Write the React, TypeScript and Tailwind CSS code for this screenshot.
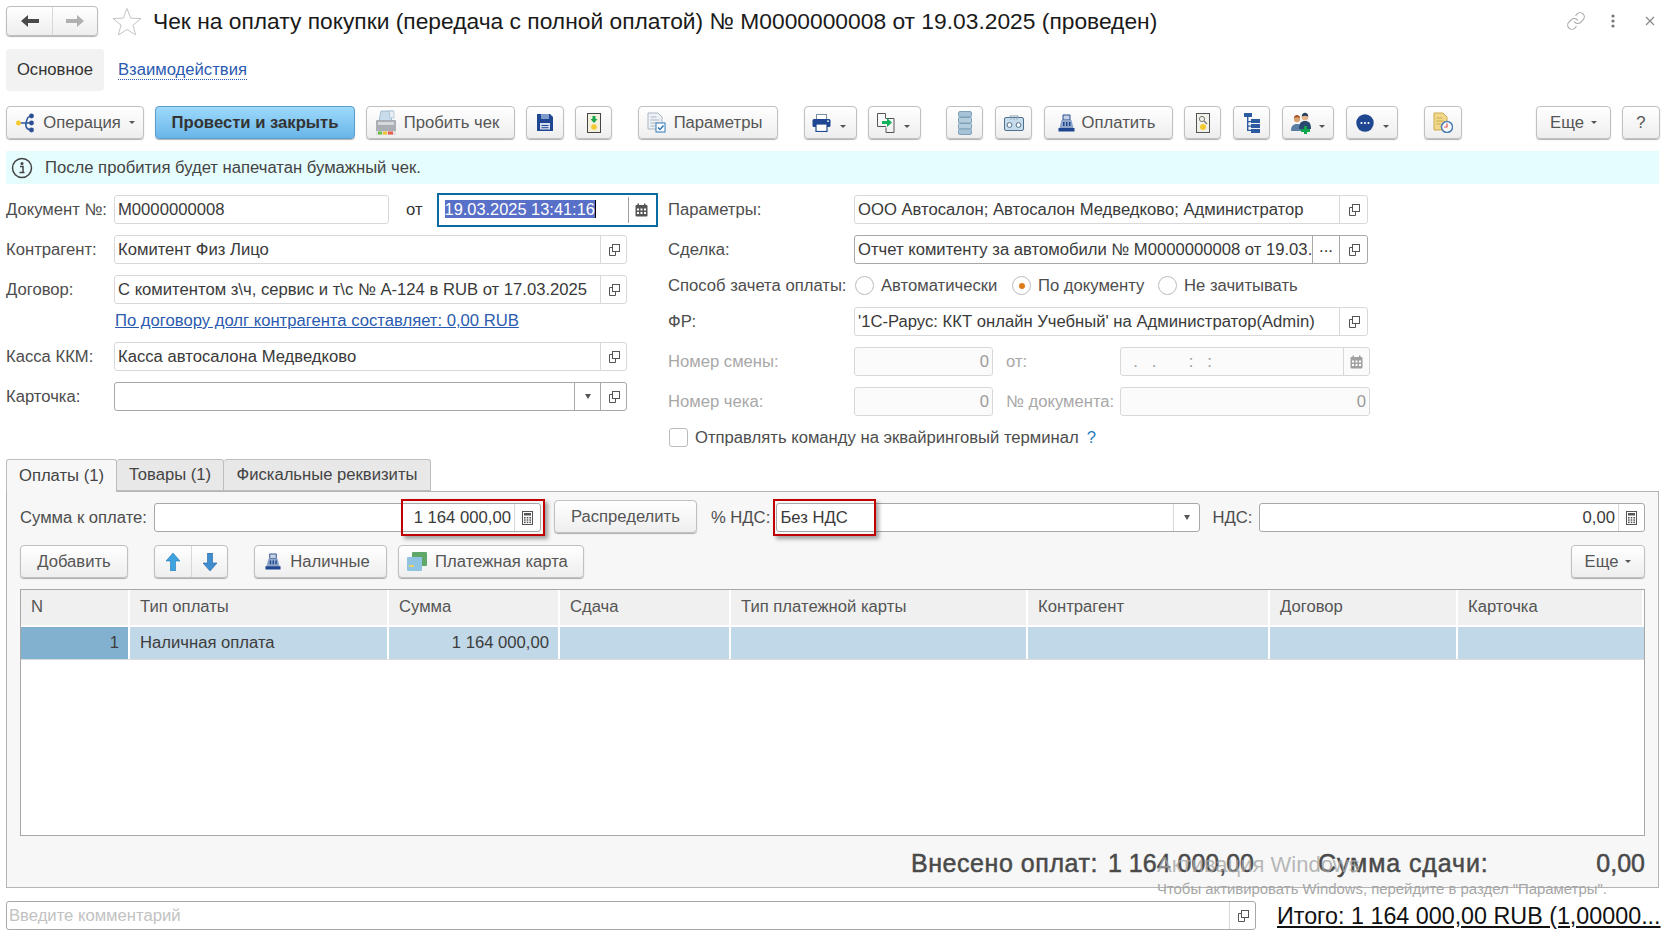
import React from 'react';
import { Link } from 'lucide-react';

const OpenIcon = () => (
  <svg width="14" height="14" viewBox="0 0 14 14" fill="none" stroke="#555" strokeWidth="1">
    <rect x="5.5" y="1.5" width="7" height="7" />
    <path d="M5.5 4.5h-3v8h6v-4" />
  </svg>
);

const CalendarIcon = ({ color = '#555' }: { color?: string }) => (
  <svg width="13" height="14" viewBox="0 0 13 14">
    <rect x="0.5" y="2" width="12" height="11.5" rx="1" fill={color} />
    <rect x="2.5" y="0.5" width="1.5" height="3" fill={color} />
    <rect x="9" y="0.5" width="1.5" height="3" fill={color} />
    <g fill="#fff">
      <rect x="2" y="5.5" width="2" height="2" /><rect x="5.5" y="5.5" width="2" height="2" /><rect x="9" y="5.5" width="2" height="2" />
      <rect x="2" y="9" width="2" height="2" /><rect x="5.5" y="9" width="2" height="2" /><rect x="9" y="9" width="2" height="2" />
    </g>
  </svg>
);

const CalcIcon = () => (
  <svg width="11" height="14" viewBox="0 0 11 14">
    <rect x="0.5" y="0.5" width="10" height="13" fill="#fff" stroke="#555" />
    <rect x="2" y="2" width="7" height="2.5" fill="#555" />
    <g fill="#555">
      <rect x="2" y="6" width="1.6" height="1.5" /><rect x="4.7" y="6" width="1.6" height="1.5" /><rect x="7.4" y="6" width="1.6" height="1.5" />
      <rect x="2" y="8.3" width="1.6" height="1.5" /><rect x="4.7" y="8.3" width="1.6" height="1.5" /><rect x="7.4" y="8.3" width="1.6" height="1.5" />
      <rect x="2" y="10.6" width="1.6" height="1.5" /><rect x="4.7" y="10.6" width="1.6" height="1.5" /><rect x="7.4" y="10.6" width="1.6" height="1.5" />
    </g>
  </svg>
);

const Caret = () => <span className="inline-block w-0 h-0 border-x-[3px] border-x-transparent border-t-[3px] border-t-[#555]" />;
const DropCaret = () => <span className="inline-block w-0 h-0 border-x-[3.5px] border-x-transparent border-t-[5px] border-t-[#555]" />;

const IconOperation = () => (
  <svg width="22" height="22" viewBox="0 0 22 22" fill="none">
    <circle cx="3.5" cy="11" r="2.5" fill="#f4c92f" />
    <path d="M6 11h5M17 4c-4 0-5 2-6 7s2 7 6 7" stroke="#2d5a9e" strokeWidth="1.6" />
    <path d="M11 11h6" stroke="#2d5a9e" strokeWidth="1.6" />
    <circle cx="16.5" cy="4" r="2.4" fill="#2d4f94" />
    <circle cx="16.5" cy="11" r="2.4" fill="#2d4f94" />
    <circle cx="16.5" cy="18" r="2.4" fill="#2d4f94" />
  </svg>
);
const IconReceipt = () => (
  <svg width="22" height="26" viewBox="0 0 22 26">
    <path d="M6 1h12l-2 10H4z" fill="#c8dceb" stroke="#8aa9c0" strokeWidth="0.7" />
    <path d="M14 1h5v7h-4z" fill="#e8eef3" stroke="#8aa9c0" strokeWidth="0.5" />
    <rect x="1" y="10" width="20" height="12" rx="1" fill="#a9afb5" />
    <rect x="3" y="12" width="16" height="3" fill="#d7dadd" />
    <rect x="1" y="21" width="20" height="4" fill="#e0e0e0" />
    <rect x="3" y="21.5" width="4" height="3" fill="#6cc04a" />
    <rect x="8" y="21.5" width="4" height="3" fill="#f2c230" />
    <rect x="13" y="21.5" width="5" height="3" fill="#e85b4a" />
  </svg>
);
const IconSave = () => (
  <svg width="18" height="19" viewBox="0 0 18 19">
    <path d="M1 1h13l3 3v14H1z" fill="#1f4690" />
    <rect x="5" y="1" width="8" height="5" fill="#7f9bcb" />
    <rect x="4" y="10" width="10" height="6.5" fill="#d5deee" />
    <rect x="5.5" y="12" width="7" height="1" fill="#1f4690" />
    <rect x="5.5" y="14.2" width="7" height="1" fill="#1f4690" />
  </svg>
);
const IconSignal = () => (
  <svg width="14" height="20" viewBox="0 0 14 20">
    <rect x="0.5" y="0.5" width="13" height="19" fill="#f3f1dd" stroke="#444" />
    <path d="M5.5 3h3v3h2L7 10 3.5 6h2z" fill="#13a54b" />
    <circle cx="7" cy="14" r="2.8" fill="#f4c92f" />
  </svg>
);
const IconParams = () => (
  <svg width="19" height="21" viewBox="0 0 19 21">
    <path d="M1 1h10l4 4v12H1z" fill="#eef2f6" stroke="#a9b6c2" />
    <path d="M3.5 5h6M3.5 8h9M3.5 11h9M3.5 14h5" stroke="#a9b6c2" />
    <rect x="9" y="11" width="9" height="9" fill="#fff" stroke="#2f78b7" />
    <path d="M11 15.5l2 2 3.5-4" stroke="#2f78b7" strokeWidth="1.5" fill="none" />
  </svg>
);
const IconPrint = () => (
  <svg width="19" height="18" viewBox="0 0 19 18">
    <rect x="4.5" y="0.5" width="10" height="5" fill="#fff" stroke="#7d8da3" />
    <rect x="0.5" y="5" width="18" height="8" rx="1.5" fill="#1f4690" />
    <rect x="4" y="10" width="11" height="7.5" fill="#fff" stroke="#1f4690" strokeWidth="1.2" />
    <rect x="15" y="6.5" width="2" height="1.2" fill="#fff" />
  </svg>
);
const IconCopyIn = () => (
  <svg width="20" height="21" viewBox="0 0 20 21" fill="none">
    <path d="M10 14.5H1.5v-13h8v5" stroke="#555" />
    <path d="M10 6.5h8v14h-8v-5" stroke="#555" />
    <path d="M6 9h5V6l5 4.5-5 4.5v-3H6z" fill="#12b15a" />
  </svg>
);
const IconStack = () => (
  <svg width="14" height="24" viewBox="0 0 14 24">
    <rect x="0.5" y="0.5" width="13" height="5.5" rx="1.5" fill="#a6c2d6" stroke="#7ea0b9" />
    <rect x="0.5" y="6.5" width="13" height="5.5" rx="1" fill="#b4cddd" stroke="#7ea0b9" />
    <rect x="0.5" y="12.5" width="13" height="5.5" rx="1" fill="#b4cddd" stroke="#7ea0b9" />
    <rect x="0.5" y="18" width="13" height="5.5" rx="1.5" fill="#a6c2d6" stroke="#7ea0b9" />
  </svg>
);
const IconCassette = () => (
  <svg width="20" height="16" viewBox="0 0 20 16">
    <rect x="0.5" y="2.5" width="19" height="13" rx="1.5" fill="#c6dceb" stroke="#4e6f8e" />
    <path d="M6 2.5V.8h8v1.7M7 1v4M10 1v4M13 1v4" stroke="#8ca4b8" fill="none" strokeWidth="0.8" />
    <circle cx="5.5" cy="10" r="2.4" fill="#fff" stroke="#4e6f8e" />
    <circle cx="14.5" cy="10" r="2.4" fill="#fff" stroke="#4e6f8e" />
  </svg>
);
const IconRegister = ({ size = 17 }: { size?: number }) => (
  <svg width={size} height={size + 1} viewBox="0 0 17 18">
    <path d="M5 1h7v5H5z" fill="#c6d2e3" stroke="#2b4f90" />
    <path d="M3.5 6h10l2 8h-14z" fill="#8fa6c9" />
    <path d="M5 8h1.5v4H5zM8 8h1.5v4H8zM11 8h1.5v4H11z" fill="#1f4690" />
    <rect x="0.5" y="14" width="16" height="3.5" fill="#1f4690" />
  </svg>
);
const IconSearchFrame = () => (
  <svg width="14" height="20" viewBox="0 0 14 20" fill="none">
    <rect x="0.5" y="0.5" width="13" height="19" fill="#f1f1ea" stroke="#555" />
    <circle cx="6" cy="6" r="2.6" stroke="#777" />
    <path d="M8 8l3 3" stroke="#777" strokeWidth="1.2" />
    <circle cx="7" cy="14" r="3" fill="#f4c92f" />
  </svg>
);
const IconTree = () => (
  <svg width="16" height="20" viewBox="0 0 16 20" fill="#2b5aa0">
    <rect x="0" y="0" width="8" height="4" />
    <path d="M3 4h1.4v14H3zM4 8h3v1.2H4zM4 12.6h3v1.2H4zM4 16.8h3V18H4z" />
    <rect x="7" y="6" width="9" height="4" />
    <rect x="7" y="11" width="9" height="4" />
    <rect x="7" y="16" width="9" height="4" />
  </svg>
);
const IconPeople = () => (
  <svg width="22" height="22" viewBox="0 0 22 22">
    <circle cx="6" cy="7" r="3.2" fill="#d9a273" />
    <path d="M3 6c0-4 6-4 6 0-2-1-4-1-6 0z" fill="#a3541f" />
    <path d="M0 19c0-5 2-7 6-7s5 2 5 7z" fill="#5a7da3" />
    <circle cx="14" cy="5" r="3.4" fill="#e2b48b" />
    <path d="M10.8 4.5c0-5 6.4-5 6.4 0-2-1-4.400-1-6.400 0z" fill="#24405f" />
    <path d="M8 17c0-6 2-8 6-8s6 2 6 8z" fill="#28486f" />
    <path d="M13 14h3v3h3v3h-3v2h-3v-2h-3v-3h3z" fill="#0da64c" />
  </svg>
);
const IconDots = () => (
  <svg width="18" height="18" viewBox="0 0 18 18">
    <circle cx="9" cy="9" r="8.700" fill="#1f4690" />
    <circle cx="5.500" cy="9" r="1.100" fill="#fff" /><circle cx="9" cy="9" r="1.100" fill="#fff" /><circle cx="12.500" cy="9" r="1.100" fill="#fff" />
  </svg>
);
const IconDocClock = () => (
  <svg width="20" height="21" viewBox="0 0 20 21">
    <path d="M1 1h9l4 4v13H1z" fill="#f0d98a" stroke="#cdaa4e" />
    <path d="M3.500 6h6M3.500 9h7M3.500 12h4" stroke="#cdaa4e" />
    <circle cx="14" cy="15" r="5.500" fill="#fff" stroke="#4a7db5" strokeWidth="1.500" />
    <path d="M14 11.500V15h-3" stroke="#d9534f" strokeWidth="1.200" fill="none" />
  </svg>
);

const Btn: React.FC<{ w: string; ml?: string; children: React.ReactNode; primary?: boolean }> = ({ w, ml = '', children, primary }) => (
  <div
    className={`${w} ${ml} h-[33px] shrink-0 flex items-center justify-center rounded-[4px] border ${
      primary
        ? 'bg-gradient-to-b from-[#9edafc] to-[#68b5e8] border-[#5b9ecb] text-[#333] font-bold'
        : 'bg-gradient-to-b from-white to-[#eeeeee] border-[#c0c0c0] text-[#555]'
    } shadow-[0_1px_1px_rgba(0,0,0,0.3)]`}
  >
    {children}
  </div>
);

const Field: React.FC<{
  w: string;
  value?: string;
  dark?: boolean;
  disabled?: boolean;
  right?: boolean;
  children?: React.ReactNode;
}> = ({ w, value = '', dark, disabled, right, children }) => (
  <div
    className={`${w} h-[29px] shrink-0 flex items-stretch rounded-[3px] border ${
      dark ? 'border-[#a8a8a8]' : 'border-[#d8d8d8]'
    } ${disabled ? 'bg-[#fbfbfb]' : 'bg-white'}`}
  >
    <div
      className={`flex-1 min-w-0 px-[3px] leading-[27px] whitespace-pre overflow-hidden ${right ? 'text-right' : ''} ${
        disabled ? 'text-[#9a9a9a]' : 'text-[#3a3a3a]'
      }`}
    >
      {value}
    </div>
    {children}
  </div>
);

const Cell: React.FC<{ w?: string; children: React.ReactNode; border?: string }> = ({ w = 'w-[26px]', children, border = 'border-[#d8d8d8]' }) => (
  <div className={`${w} shrink-0 border-l ${border} flex items-center justify-center`}>{children}</div>
);

const Radio: React.FC<{ on?: boolean }> = ({ on }) => (
  <span className="w-[19px] h-[19px] shrink-0 rounded-full border border-[#bcbcbc] bg-white flex items-center justify-center">
    {on && <span className="w-[6px] h-[6px] rounded-full bg-[#e07b1a]" />}
  </span>
);

const headers = ['N', 'Тип оплаты', 'Сумма', 'Сдача', 'Тип платежной карты', 'Контрагент', 'Договор', 'Карточка'];

export default function App() {
  return (
    <div className="relative w-[1675px] h-[942px] overflow-hidden bg-white text-[16.65px] leading-[26px] text-[#4d4d4d] font-['Liberation_Sans',Arial,sans-serif]">
      {/* header */}
      <div className="flex items-center h-[30px] mt-[6px] pl-[6px]">
        <div className="w-[92px] h-[30px] flex rounded-[4px] border border-[#bdbdbd] bg-gradient-to-b from-white to-[#eeeeee] shadow-[0_1px_1px_rgba(0,0,0,0.3)]">
          <div className="w-[46px] flex items-center justify-center border-r border-[#d8d8d8]">
            <svg width="18" height="14" viewBox="0 0 18 14"><path d="M0 7l7-6v4h11v4H7v4z" fill="#4a4a4a" /></svg>
          </div>
          <div className="flex-1 flex items-center justify-center">
            <svg width="18" height="14" viewBox="0 0 18 14"><path d="M18 7l-7-6v4H0v4h11v4z" fill="#b0b0b0" /></svg>
          </div>
        </div>
        <svg className="ml-[14px]" width="30" height="28" viewBox="0 0 30 28">
          <path d="M15 1.500l3.700 9.600 10.300.5-8 6.500 2.700 9.900L15 22.500l-8.700 5.500L9 18.100 1 11.600l10.300-.5z" fill="#fff" stroke="#c4c4c4" />
        </svg>
        <div className="ml-[11px] text-[22.8px] text-[#1a1a1a] whitespace-nowrap leading-[30px]">
          Чек на оплату покупки (передача с полной оплатой) № М0000000008 от 19.03.2025 (проведен)
        </div>
        <div className="ml-auto flex items-center pr-[20px]">
          <Link size={20} strokeWidth={1.3} color="#a8a8a8" />
          <svg className="ml-[25px]" width="4" height="14" viewBox="0 0 4 14" fill="#777">
            <circle cx="2" cy="2" r="1.600" /><circle cx="2" cy="7" r="1.600" /><circle cx="2" cy="12" r="1.600" />
          </svg>
          <svg className="ml-[30px]" width="10" height="10" viewBox="0 0 10 10" stroke="#888" strokeWidth="1.200">
            <path d="M1 1l8 8M9 1l-8 8" />
          </svg>
        </div>
      </div>

      {/* page tabs */}
      <div className="flex items-center mt-[13px] pl-[6px] h-[42px]">
        <div className="w-[98px] h-[42px] rounded-[4px] bg-[#f2f2f2] flex items-center justify-center text-[#333]">Основное</div>
        <span className="ml-[14px] text-[#2a5bb0] border-b border-dotted border-[#2a5bb0] leading-[18px]">Взаимодействия</span>
      </div>

      {/* toolbar */}
      <div className="flex mt-[15px] pl-[6px] pr-[15px]">
        <Btn w="w-[138px]"><IconOperation /><span className="ml-[6px] mr-[8px]">Операция</span><Caret /></Btn>
        <Btn w="w-[200px]" ml="ml-[11px]" primary>Провести и закрыть</Btn>
        <Btn w="w-[149px]" ml="ml-[11px]"><IconReceipt /><span className="ml-[7px] mr-[7px]">Пробить чек</span></Btn>
        <Btn w="w-[38px]" ml="ml-[11px]"><IconSave /></Btn>
        <Btn w="w-[37px]" ml="ml-[11px]"><IconSignal /></Btn>
        <Btn w="w-[140px]" ml="ml-[26px]"><IconParams /><span className="ml-[8px] mr-[7px]">Параметры</span></Btn>
        <Btn w="w-[53px]" ml="ml-[26px]"><IconPrint /><span className="ml-[9px] mr-[3px]"><Caret /></span></Btn>
        <Btn w="w-[53px]" ml="ml-[11px]"><IconCopyIn /><span className="ml-[8px] mr-[3px]"><Caret /></span></Btn>
        <Btn w="w-[37px]" ml="ml-[25px]"><IconStack /></Btn>
        <Btn w="w-[37px]" ml="ml-[12px]"><IconCassette /></Btn>
        <Btn w="w-[129px]" ml="ml-[12px]"><IconRegister /><span className="ml-[7px] mr-[4px]">Оплатить</span></Btn>
        <Btn w="w-[37px]" ml="ml-[11px]"><IconSearchFrame /></Btn>
        <Btn w="w-[37px]" ml="ml-[12px]"><IconTree /></Btn>
        <Btn w="w-[52px]" ml="ml-[12px]"><IconPeople /><span className="ml-[6px]"><Caret /></span></Btn>
        <Btn w="w-[52px]" ml="ml-[12px]"><IconDots /><span className="ml-[9px]"><Caret /></span></Btn>
        <Btn w="w-[38px]" ml="ml-[26px]"><IconDocClock /></Btn>
        <Btn w="w-[75px]" ml="ml-auto"><span className="mr-[7px]">Еще</span><Caret /></Btn>
        <Btn w="w-[38px]" ml="ml-[11px]">?</Btn>
      </div>

      {/* info bar */}
      <div className="mt-[12px] ml-[6px] mr-[16px] h-[33px] bg-[#e6fdfe] flex items-center pl-[5px] text-[#444]">
        <svg width="22" height="22" viewBox="0 0 22 22" fill="none">
          <circle cx="11" cy="11" r="9.500" stroke="#444" strokeWidth="1.500" />
          <circle cx="11" cy="6.500" r="1.500" fill="#444" />
          <path d="M9 9.500h3v6h1.500M8.500 15.500h5" stroke="#444" strokeWidth="1.500" />
        </svg>
        <span className="ml-[12px]">После пробития будет напечатан бумажный чек.</span>
      </div>

      {/* requisites */}
      <div className="flex mt-[11px] pl-[6px]">
        <div className="w-[662px] shrink-0">
          <div className="flex items-center h-[29px]">
            <span className="w-[108px]">Документ №:</span>
            <Field w="w-[275px]" value="М0000000008" />
            <span className="ml-[17px] text-[#333]">от</span>
            <div className="ml-[14px] w-[221px] h-[34px] shrink-0 flex items-center border-2 border-[#0b6ba0] bg-white pl-[6px]">
              <span className="flex-1 leading-[20px] text-[16.4px] mb-[2px]">
                <span className="bg-[#5870c8] text-white border-r border-black">19.03.2025 13:41:16</span>
              </span>
              <div className="w-[28px] h-[26px] border-l border-[#a0a0a0] flex items-center justify-center pr-[2px]"><CalendarIcon /></div>
            </div>
          </div>
          <div className="flex items-center h-[29px] mt-[11px]">
            <span className="w-[108px]">Контрагент:</span>
            <Field w="w-[513px]" value="Комитент Физ Лицо"><Cell><OpenIcon /></Cell></Field>
          </div>
          <div className="flex items-center h-[29px] mt-[11px]">
            <span className="w-[108px]">Договор:</span>
            <Field w="w-[513px]" value="С комитентом з\ч, сервис и т\с № А-124 в RUB от 17.03.2025"><Cell><OpenIcon /></Cell></Field>
          </div>
          <div className="h-[38px] pl-[109px] pt-[7px] leading-[20px]">
            <span className="text-[#2a5bb0] underline">По договору долг контрагента составляет: 0,00 RUB</span>
          </div>
          <div className="flex items-center h-[29px]">
            <span className="w-[108px]">Касса ККМ:</span>
            <Field w="w-[513px]" value="Касса автосалона Медведково"><Cell><OpenIcon /></Cell></Field>
          </div>
          <div className="flex items-center h-[29px] mt-[11px]">
            <span className="w-[108px]">Карточка:</span>
            <Field w="w-[513px]" dark>
              <Cell border="border-[#a8a8a8]"><DropCaret /></Cell>
              <Cell border="border-[#a8a8a8]"><OpenIcon /></Cell>
            </Field>
          </div>
        </div>

        <div className="flex-1 min-w-0">
          <div className="flex items-center h-[29px]">
            <span className="w-[186px]">Параметры:</span>
            <Field w="w-[514px]" value="ООО Автосалон; Автосалон Медведково; Администратор"><Cell w="w-[28px]"><OpenIcon /></Cell></Field>
          </div>
          <div className="flex items-center h-[29px] mt-[11px]">
            <span className="w-[186px]">Сделка:</span>
            <Field w="w-[514px]" dark value="Отчет комитенту за автомобили № М0000000008 от 19.03.">
              <Cell w="w-[27px]" border="border-[#a8a8a8]"><span className="text-[#333] leading-none mb-[4px]">...</span></Cell>
              <Cell w="w-[28px]" border="border-[#a8a8a8]"><OpenIcon /></Cell>
            </Field>
          </div>
          <div className="flex items-center h-[29px] mt-[7px]">
            <span className="w-[187px] whitespace-nowrap">Способ зачета оплаты:</span>
            <Radio /><span className="ml-[7px] w-[131px]">Автоматически</span>
            <Radio on /><span className="ml-[7px] w-[120px]">По документу</span>
            <Radio /><span className="ml-[7px]">Не зачитывать</span>
          </div>
          <div className="flex items-center h-[29px] mt-[7px]">
            <span className="w-[186px]">ФР:</span>
            <Field w="w-[514px]" value="'1С-Рарус: ККТ онлайн Учебный' на Администратор(Admin)"><Cell w="w-[28px]"><OpenIcon /></Cell></Field>
          </div>
          <div className="flex items-center h-[29px] mt-[11px] text-[#a8a8a8]">
            <span className="w-[186px]">Номер смены:</span>
            <Field w="w-[139px]" value="0" right disabled />
            <span className="ml-[13px] w-[114px]">от:</span>
            <Field w="w-[250px]" value="  .   .       :   :" disabled>
              <Cell><CalendarIcon color="#a0a0a0" /></Cell>
            </Field>
          </div>
          <div className="flex items-center h-[29px] mt-[11px] text-[#a8a8a8]">
            <span className="w-[186px]">Номер чека:</span>
            <Field w="w-[139px]" value="0" right disabled />
            <span className="ml-[13px] w-[114px] whitespace-nowrap">№ документа:</span>
            <Field w="w-[250px]" value="0" right disabled />
          </div>
          <div className="flex items-center h-[19px] mt-[12px]">
            <span className="ml-[1px] w-[19px] h-[19px] rounded-[3px] border border-[#bcbcbc] bg-white" />
            <span className="ml-[7px]">Отправлять команду на эквайринговый терминал</span>
            <span className="ml-[8px] text-[#2a7fc0]">?</span>
          </div>
        </div>
      </div>

      {/* tabs */}
      <div className="flex mt-[12px] ml-[6px] h-[32px] relative z-10 text-[#444]">
        <div className="w-[111px] h-[33px] flex items-center justify-center rounded-t-[3px] border border-b-0 border-[#bdbdbd] bg-[#f7f7f7]">Оплаты (1)</div>
        <div className="w-[107px] h-[32px] flex items-center justify-center rounded-t-[3px] border-y border-r border-[#bdbdbd] bg-[#e8e8e8]">Товары (1)</div>
        <div className="w-[207px] h-[32px] flex items-center justify-center rounded-t-[3px] border-y border-r border-[#bdbdbd] bg-[#e8e8e8]">Фискальные реквизиты</div>
      </div>

      <div className="ml-[6px] mr-[16px] h-[397px] border border-[#b4b4b4] bg-[#f7f7f7] pl-[13px] pr-[13px] pt-[11px]">
        <div className="flex items-center h-[29px]">
          <span className="w-[135px] whitespace-nowrap">Сумма к оплате:</span>
          <div className="relative">
            <Field w="w-[387px]" dark value="1 164 000,00" right><Cell><CalcIcon /></Cell></Field>
            <div className="absolute -top-[4px] -right-[4px] w-[144px] h-[37px] border-2 border-[#c00000] shadow-[3px_3px_4px_rgba(0,0,0,0.35)]" />
          </div>
          <div className="ml-[13px] -mt-[2px]"><Btn w="w-[143px]">Распределить</Btn></div>
          <span className="ml-[14px] w-[66px] whitespace-nowrap">% НДС:</span>
          <div className="relative">
            <Field w="w-[424px]" dark value="Без НДС"><Cell><DropCaret /></Cell></Field>
            <div className="absolute -top-[4px] -left-[3px] w-[103px] h-[37px] border-2 border-[#c00000] shadow-[3px_3px_4px_rgba(0,0,0,0.35)]" />
          </div>
          <span className="ml-[12px] w-[47px]">НДС:</span>
          <Field w="w-[386px]" dark value="0,00" right><Cell><CalcIcon /></Cell></Field>
        </div>

        <div className="flex mt-[13px]">
          <Btn w="w-[108px]">Добавить</Btn>
          <div className="ml-[26px] w-[74px] h-[33px] shrink-0 flex rounded-[4px] border border-[#c0c0c0] bg-gradient-to-b from-white to-[#eeeeee] shadow-[0_1px_1px_rgba(0,0,0,0.3)]">
            <div className="w-[37px] border-r border-[#d8d8d8] flex items-center justify-center">
              <svg width="14" height="18" viewBox="0 0 14 18"><path d="M7 0l7 8H9.500v10h-5V8H0z" fill="#3fa3e0" stroke="#2277b8" strokeWidth="0.600" /></svg>
            </div>
            <div className="flex-1 flex items-center justify-center">
              <svg width="14" height="18" viewBox="0 0 14 18"><path d="M7 18l7-8H9.500V0h-5v10H0z" fill="#3f8fd0" stroke="#22609f" strokeWidth="0.600" /></svg>
            </div>
          </div>
          <Btn w="w-[133px]" ml="ml-[26px]"><IconRegister size={16} /><span className="ml-[9px] mr-[6px]">Наличные</span></Btn>
          <Btn w="w-[186px]" ml="ml-[11px]">
            <svg width="20" height="20" viewBox="0 0 20 20">
              <rect x="5" y="0" width="15" height="14" rx="1" fill="#5fa86a" />
              <rect x="0" y="5" width="15" height="14" rx="1" fill="#8fc4e2" />
              <rect x="2" y="13" width="5" height="2" fill="#e8d56a" />
            </svg>
            <span className="ml-[8px] mr-[7px]">Платежная карта</span>
          </Btn>
          <Btn w="w-[74px]" ml="ml-auto"><span className="mr-[7px]">Еще</span><Caret /></Btn>
        </div>

        <div className="mt-[11px] h-[247px] border border-[#a8a8a8] bg-white">
          <div className="grid grid-cols-[109px_259px_171px_171px_297px_242px_188px_1fr] h-[37px] border-b-2 border-white">
            {headers.map(h => (
              <div key={h} className="bg-[#f0f0f0] border-r-2 border-white pl-[10px] leading-[33px] whitespace-nowrap text-[#555]">{h}</div>
            ))}
          </div>
          <div className="grid grid-cols-[109px_259px_171px_171px_297px_242px_188px_1fr] h-[33px] border-b border-[#dcdcdc] text-[#3d3d3d] leading-[31px]">
            <div className="bg-[#82b1cf] border-r-2 border-white pr-[9px] text-right">1</div>
            <div className="bg-[#c0d8e7] border-r-2 border-white pl-[10px]">Наличная оплата</div>
            <div className="bg-[#c0d8e7] border-r-2 border-white pr-[9px] text-right">1 164 000,00</div>
            <div className="bg-[#c0d8e7] border-r-2 border-white" />
            <div className="bg-[#c0d8e7] border-r-2 border-white" />
            <div className="bg-[#c0d8e7] border-r-2 border-white" />
            <div className="bg-[#c0d8e7] border-r-2 border-white" />
            <div className="bg-[#c0d8e7]" />
          </div>
        </div>

        <div className="flex justify-end items-center h-[51px] pt-[3px] text-[25px] text-[#4a4a4a] whitespace-nowrap [-webkit-text-stroke:0.5px_#4a4a4a]">
          <span className="w-[197px] tracking-[0.55px]">Внесено оплат:</span>
          <span className="w-[210px]">1 164 000,00</span>
          <span className="w-[170px] tracking-[0.9px]">Сумма сдачи:</span>
          <span className="w-[157px] text-right">0,00</span>
        </div>
      </div>

      {/* comment */}
      <div className="flex items-center mt-[13px] ml-[6px]">
        <div className="w-[1250px] h-[29px] shrink-0 flex rounded-[3px] border border-[#a8a8a8] bg-white">
          <div className="flex-1 pl-[2px] leading-[27px] text-[#c2c2c2]">Введите комментарий</div>
          <Cell border="border-[#d8d8d8]"><OpenIcon /></Cell>
        </div>
        <span className="ml-[21px] text-[23.3px] text-[#111] underline whitespace-nowrap">Итого: 1 164 000,00 RUB (1,00000...</span>
      </div>

      {/* windows activation watermark */}
      <div className="absolute left-[1157px] top-[853px] pointer-events-none text-[#a6a6a6] whitespace-nowrap">
        <div className="text-[22px] leading-[24px] text-[#a6a6a6]/80">Активация Windows</div>
        <div className="text-[14.9px] leading-[20px] mt-[2px]">Чтобы активировать Windows, перейдите в раздел "Параметры".</div>
      </div>
    </div>
  );
}
